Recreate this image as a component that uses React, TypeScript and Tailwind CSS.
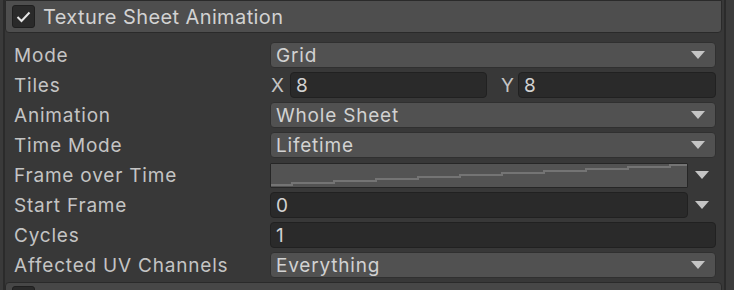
import React from "react";

const Arrow = () => (
  <svg width="14" height="8" viewBox="0 0 14 8" className="shrink-0">
    <polygon points="0,0 14,0 7,8" fill="#c4c4c4" />
  </svg>
);

const Row = ({ label, children }: { label: string; children: React.ReactNode }) => (
  <div className="h-[30px] flex items-center">
    <div className="w-[265px] pl-[9px] text-[#c4c4c4] shrink-0">{label}</div>
    <div className="flex-1 flex items-center pr-[6px]">{children}</div>
  </div>
);

const Dropdown = ({ value }: { value: string }) => (
  <div className="flex-1 h-[26px] flex items-center justify-between pl-[5px] pr-[10px] bg-[#515151] border border-[#303030] rounded-[4px] text-[#d2d2d2]">
    <span>{value}</span>
    <Arrow />
  </div>
);

const Field = ({ value, className = "flex-1" }: { value: string; className?: string }) => (
  <div className={`${className} h-[26px] flex items-center pl-[5px] bg-[#2a2a2a] border border-[#212121] rounded-[4px] text-[#d2d2d2]`}>
    {value}
  </div>
);

// stepped line of the frame curve
const steps = () => {
  const pts: string[] = ["0,21"];
  let y = 21;
  for (let i = 0; i < 10; i++) {
    const x = 21 + i * 42;
    pts.push(`${x},${y}`);
    y -= 2;
    pts.push(`${x},${y}`);
  }
  pts.push(`416,${y}`);
  return pts.join(" ");
};

export default function App() {
  return (
    <div
      className="w-[734px] h-[290px] overflow-hidden bg-[#383838] flex text-[19px] leading-none tracking-[0.8px]"
      style={{ fontFamily: "Inter, 'Noto Sans', sans-serif" }}
    >
      <div className="w-[5px] shrink-0 bg-[#3a3a3a] border-r-2 border-[#2b2b2b]" />
      <div className="w-[717px] shrink-0 flex flex-col">
        {/* Module header */}
        <div className="h-[33px] shrink-0 flex items-center gap-[8px] pl-[6px] bg-[#4e4e4e] border border-[#2a2a2a] rounded-b-[4px]">
          <div className="w-[23px] h-[23px] flex items-center justify-center bg-[#2a2a2a] border border-[#1f1f1f] rounded-[3px]">
            <svg width="15" height="12" viewBox="0 0 15 12">
              <polyline points="1.5,6 5.5,10 13.5,1.5" fill="none" stroke="#e6e6e6" strokeWidth="2" />
            </svg>
          </div>
          <span className="text-[20px] tracking-[0.4px] text-[#d2d2d2]">Texture Sheet Animation</span>
        </div>

        <div className="pt-[7px] flex flex-col">
          <Row label="Mode">
            <Dropdown value="Grid" />
          </Row>
          <Row label="Tiles">
            <span className="text-[#c4c4c4] w-[20px] pl-[1px]">X</span>
            <Field value="8" className="w-[197px]" />
            <span className="text-[#c4c4c4] w-[31px] pl-[14px]">Y</span>
            <Field value="8" />
          </Row>
          <Row label="Animation">
            <Dropdown value="Whole Sheet" />
          </Row>
          <Row label="Time Mode">
            <Dropdown value="Lifetime" />
          </Row>
          <Row label="Frame over Time">
            <div className="flex-1 h-[25px] bg-[#535353] border border-[#262626] rounded-[1px] overflow-hidden">
              <svg width="416" height="23" viewBox="0 0 416 23">
                <polyline points={steps()} fill="none" stroke="#747474" strokeWidth="2" />
              </svg>
            </div>
            <div className="w-[28px] flex justify-center">
              <Arrow />
            </div>
          </Row>
          <Row label="Start Frame">
            <Field value="0" />
            <div className="w-[28px] flex justify-center">
              <Arrow />
            </div>
          </Row>
          <Row label="Cycles">
            <Field value="1" />
          </Row>
          <Row label="Affected UV Channels">
            <Dropdown value="Everything" />
          </Row>
        </div>

        {/* Next module header, cut off */}
        <div className="mt-[2px] h-[33px] shrink-0 flex items-start gap-[8px] pl-[6px] pt-[3px] bg-[#474747] border border-[#2a2a2a] rounded-t-[4px]">
          <div className="w-[23px] h-[23px] bg-[#2a2a2a] border border-[#1f1f1f] rounded-[3px]" />
          <span className="text-[20px] tracking-[0.4px] text-[#d2d2d2] pt-[3px]">Lights</span>
        </div>
      </div>
      <div className="flex-1 bg-[#3c3c3c] border-l-2 border-[#2b2b2b] ml-[2px]" />
    </div>
  );
}
